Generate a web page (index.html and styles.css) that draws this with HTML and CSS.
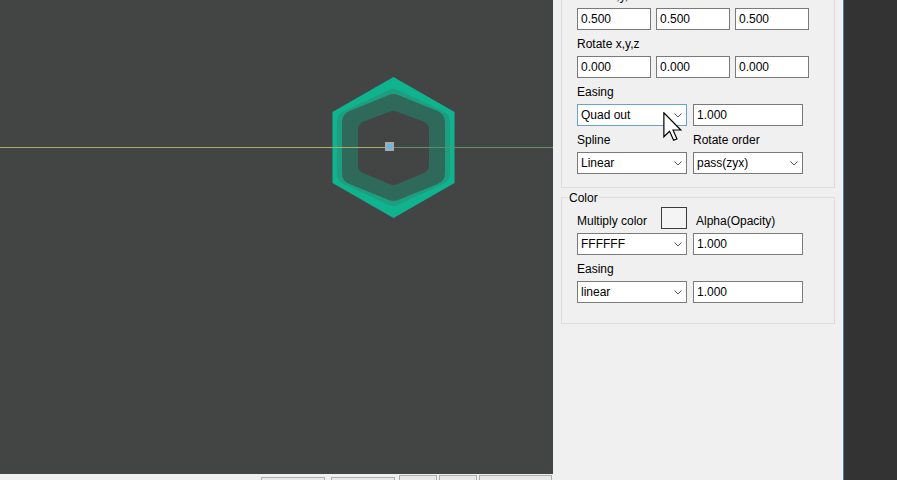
FILE: index.html
```html
<!DOCTYPE html>
<html>
<head>
<meta charset="utf-8">
<link rel="stylesheet" href="styles.css">
</head>
<body>
<div class="app">
  <div class="left">
    <div class="canvas">
      <svg class="scene" width="553" height="474" viewBox="0 0 553 474">
        <polygon points="393.5,77 454.5,112 454.5,183 393.5,218 332.5,183 332.5,112" fill="#0fb48f"/>
        <polygon points="349,122 393.5,101 438,122 438,173 393.5,194 349,173" fill="#1e9d7f" stroke="#1e9d7f" stroke-width="24" stroke-linejoin="round"/>
        <polygon points="354,122 393.5,106 433,122 433,173 393.5,189 354,173" fill="#2f695a" stroke="#2f695a" stroke-width="24" stroke-linejoin="round"/>
        <polygon points="367,130 393.5,120 420,130 420,165 393.5,176 367,165" fill="#434544" stroke="#434544" stroke-width="18" stroke-linejoin="round"/>
        <rect x="0" y="147" width="385" height="1" fill="#a9ad68"/>
        <rect x="394" y="147" width="159" height="1" fill="#5e8f6c"/>
        <rect x="385" y="142" width="9" height="9" fill="#a7a9ab"/>
        <rect x="387" y="144" width="5" height="5" fill="#66b6ea"/>
      </svg>
    </div>
    <div class="bottombar">
      <span class="btn low w64"></span>
      <span class="btn low w64 gap6"></span>
      <span class="btn high w38 gap4"></span>
      <span class="btn high w38 gap2"></span>
      <span class="btn high w73 gap2"></span>
    </div>
  </div>

  <div class="panel">
    <div class="group g1">
      <div class="field">
        <div class="label">Scale x,y,z</div>
        <div class="row">
          <div class="tb s">0.500</div>
          <div class="tb s">0.500</div>
          <div class="tb s">0.500</div>
        </div>
      </div>
      <div class="field">
        <div class="label">Rotate x,y,z</div>
        <div class="row">
          <div class="tb s">0.000</div>
          <div class="tb s">0.000</div>
          <div class="tb s">0.000</div>
        </div>
      </div>
      <div class="field">
        <div class="label">Easing</div>
        <div class="row wide">
          <div class="tb m combo hot"><span>Quad out</span><svg class="chev" width="8" height="5" viewBox="0 0 8 5"><polyline points="0.5,0.5 4,4 7.5,0.5" fill="none" stroke="#5a5a5a" stroke-width="1"/></svg></div>
          <div class="tb m">1.000</div>
        </div>
      </div>
      <div class="field">
        <div class="label labels"><span class="c1">Spline</span><span>Rotate order</span></div>
        <div class="row wide">
          <div class="tb m combo"><span>Linear</span><svg class="chev" width="8" height="5" viewBox="0 0 8 5"><polyline points="0.5,0.5 4,4 7.5,0.5" fill="none" stroke="#5a5a5a" stroke-width="1"/></svg></div>
          <div class="tb m combo"><span>pass(zyx)</span><svg class="chev" width="8" height="5" viewBox="0 0 8 5"><polyline points="0.5,0.5 4,4 7.5,0.5" fill="none" stroke="#5a5a5a" stroke-width="1"/></svg></div>
        </div>
      </div>
    </div>

    <div class="group g2">
      <div class="legend">Color</div>
      <div class="mrow">
        <span class="ml">Multiply color</span>
        <span class="swatch"></span>
        <span class="al">Alpha(Opacity)</span>
      </div>
      <div class="row wide">
        <div class="tb m combo"><span>FFFFFF</span><svg class="chev" width="8" height="5" viewBox="0 0 8 5"><polyline points="0.5,0.5 4,4 7.5,0.5" fill="none" stroke="#5a5a5a" stroke-width="1"/></svg></div>
        <div class="tb m">1.000</div>
      </div>
      <div class="field">
        <div class="label">Easing</div>
        <div class="row wide">
          <div class="tb m combo"><span>linear</span><svg class="chev" width="8" height="5" viewBox="0 0 8 5"><polyline points="0.5,0.5 4,4 7.5,0.5" fill="none" stroke="#5a5a5a" stroke-width="1"/></svg></div>
          <div class="tb m">1.000</div>
        </div>
      </div>
    </div>

    <svg class="cursor" width="19" height="30" viewBox="0 0 12.5 20">
      <path d="M0.5,0.5 L0.5,16.5 L4.3,12.8 L7,18.8 L9.2,17.9 L6.6,12 L11.8,12 Z" fill="#fff" stroke="#000" stroke-width="0.8" stroke-linejoin="miter"/>
    </svg>
  </div>

  <div class="divider"></div>
  <div class="dark"></div>
</div>
</body>
</html>
```

FILE: styles.css
```css
* { box-sizing: border-box; }
html, body { margin: 0; padding: 0; }
body {
  width: 897px;
  height: 480px;
  overflow: hidden;
  font-family: "Liberation Sans", Arial, sans-serif;
  font-size: 12px;
  color: #000;
  background: #f0f0f0;
}
.app { display: flex; height: 480px; }

.left { width: 553px; flex: none; display: flex; flex-direction: column; }
.canvas { height: 474px; background: #434544; flex: none; }
.scene { display: block; }

.bottombar {
  flex: 1;
  display: flex;
  align-items: flex-start;
  padding-left: 261px;
  overflow: hidden;
  background: #f0f0f0;
}
.btn { height: 24px; border: 1px solid #adadad; background: #e9e9e9; flex: none; }
.btn.low { margin-top: 3px; }
.btn.high { margin-top: 1px; }
.w64 { width: 64px; }
.w38 { width: 38px; }
.w73 { width: 73px; }
.gap6 { margin-left: 6px; }
.gap4 { margin-left: 4px; }
.gap2 { margin-left: 2px; }

.panel {
  width: 290px;
  flex: none;
  padding: 0 8px;
  position: relative;
  overflow: hidden;
  background: #f0f0f0;
}
.divider { width: 1px; flex: none; background: #4a7f9e; }
.dark { flex: 1; background: #333333; }

.group { border: 1px solid #dcdcdc; padding: 0 0 13px 15px; }
.g1 { margin-top: -19px; }
.g2 { margin-top: 9px; padding-bottom: 20px; }

.legend {
  width: fit-content;
  margin: -7px 0 0 -9px;
  padding: 0 1px;
  line-height: 14px;
  background: #f0f0f0;
}

.field { padding-top: 7px; }
.label { line-height: 14px; height: 14px; margin-bottom: 5px; white-space: nowrap; }
.labels { display: flex; }
.labels .c1 { width: 116px; }

.row { display: flex; gap: 5px; }
.row.wide { gap: 6px; }

.tb {
  height: 22px;
  border: 1px solid #7a7a7a;
  background: #fff;
  padding-left: 3px;
  line-height: 20px;
  white-space: nowrap;
  flex: none;
}
.tb.s { width: 74px; }
.tb.m { width: 110px; }
.combo { display: flex; justify-content: space-between; align-items: center; padding-right: 4px; }
.combo.hot { border-color: #6aa0d8; }
.chev { display: block; }

.mrow { display: flex; height: 22px; margin-top: 2px; margin-bottom: 4px; }
.mrow .ml { width: 84px; padding-top: 7px; line-height: 14px; white-space: nowrap; }
.swatch { width: 26px; height: 22px; border: 1px solid #3c3c3c; background: #f4f4f4; flex: none; }
.mrow .al { margin-left: 9px; padding-top: 7px; line-height: 14px; white-space: nowrap; }

.cursor { position: absolute; left: 110px; top: 112px; }
```
